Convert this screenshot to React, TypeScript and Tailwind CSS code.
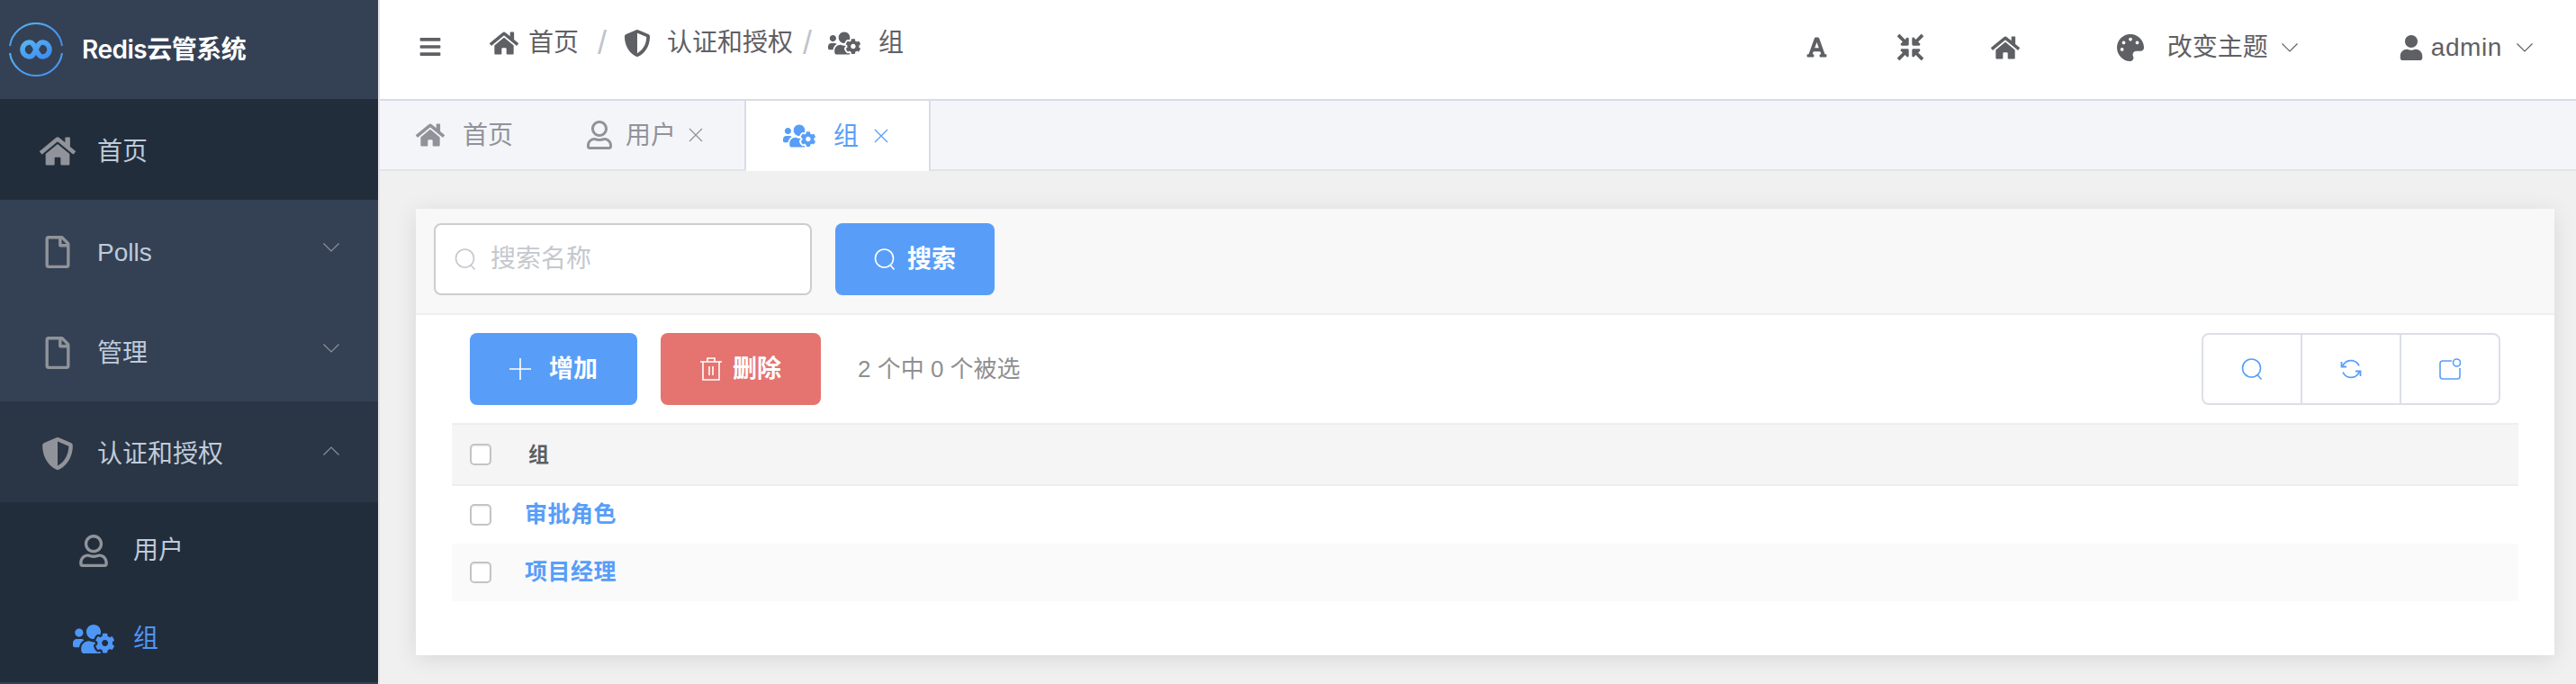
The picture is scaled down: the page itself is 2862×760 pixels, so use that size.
import React from 'react';
import {
  FaBars,
  FaCompressArrowsAlt,
  FaFont,
  FaHome,
  FaPalette,
  FaRegFile,
  FaRegUser,
  FaShieldAlt,
  FaUser,
  FaUsersCog,
} from 'react-icons/fa';

const Chevron = ({ up = false, className = '' }: { up?: boolean; className?: string }) => (
  <svg viewBox="0 0 18 10" fill="none" stroke="currentColor" strokeWidth="1.2" className={`w-[18px] h-[10px] ${className}`}>
    <path d={up ? 'M0.5 9.5 9 1l8.5 8.5' : 'M0.5 0.5 9 9l8.5-8.5'} />
  </svg>
);

const Close = ({ className = '' }: { className?: string }) => (
  <svg viewBox="0 0 16 16" fill="none" stroke="currentColor" strokeWidth="1.3" className={`w-4 h-4 ${className}`}>
    <path d="M1 1l14 14M15 1 1 15" />
  </svg>
);

const SearchIcon = ({ className = '' }: { className?: string }) => (
  <svg viewBox="0 0 24 24" fill="none" stroke="currentColor" strokeWidth="1.6" className={`w-6 h-6 ${className}`}>
    <circle cx="11.5" cy="11" r="10" />
    <path d="m18.5 19 4 4.5" />
  </svg>
);

const Logo = () => (
  <svg viewBox="0 0 60 60" fill="none" className="w-[60px] h-[60px]">
    <defs>
      <linearGradient id="logoRing" x1="0" y1="0" x2="1" y2="1">
        <stop offset="0" stopColor="#58b2f2" />
        <stop offset="1" stopColor="#3f8cf2" />
      </linearGradient>
    </defs>
    <path d="M1 26A29.3 29.3 0 0 1 59 26" stroke="url(#logoRing)" strokeWidth="2" />
    <path d="M1 34A29.3 29.3 0 0 0 59 34" stroke="url(#logoRing)" strokeWidth="2" />
    <path
      d="M30 30c-2-4-3.500-8-7-8a8 8 0 0 0 0 16c3.500 0 5-4 7-8s3.500-8 7-8a8 8 0 0 1 0 16c-3.500 0-5-4-7-8Z"
      stroke="url(#logoRing)"
      strokeWidth="5.5"
    />
  </svg>
);

const MenuItem = ({
  icon,
  label,
  open,
  className = '',
}: {
  icon: React.ReactNode;
  label: string;
  open?: boolean;
  className?: string;
}) => (
  <div className={`h-[112px] flex items-center pt-[3px] pl-[44px] pr-[43px] text-[28px] text-[#bfcbd9] ${className}`}>
    <span className="w-[40px] flex justify-center text-[#909399]">{icon}</span>
    <span className="ml-[24px] mt-[2px] flex-1">{label}</span>
    {open !== undefined && <Chevron up={open} className={`text-[#8b919b] ${open ? '-mt-[6px]' : '-mt-[9px]'}`} />}
  </div>
);

const Sidebar = () => (
  <aside className="w-[422px] shrink-0 border-r-2 border-[#e4e4e9] bg-[#344154] flex flex-col">
    <div className="h-[110px] flex items-center pl-[10px]">
      <Logo />
      <span className="ml-[21px] text-[28px] font-semibold text-white [font-family:Inter,'Noto_Sans_CJK_SC',sans-serif] tracking-[-0.5px]">
        Redis云管系统
      </span>
    </div>
    <MenuItem icon={<FaHome size={40} />} label="首页" className="bg-[#222d3c]" />
    <MenuItem icon={<FaRegFile size={36} />} label="Polls" open={false} />
    <MenuItem icon={<FaRegFile size={36} />} label="管理" open={false} />
    <MenuItem icon={<FaShieldAlt size={36} />} label="认证和授权" open className="bg-[#2a3545]" />
    <div className="bg-[#222d3c] pt-[5px] h-[200px] text-[28px]">
      <div className="h-[98px] flex items-center pl-[81px]">
        <span className="w-[46px] flex justify-center text-[#909399]">
          <FaRegUser size={36} />
        </span>
        <span className="ml-[21px] text-[#bfcbd9]">用户</span>
      </div>
      <div className="h-[97px] flex items-center pl-[81px] text-[#4f97f7]">
        <FaUsersCog size={46} />
        <span className="ml-[21px]">组</span>
      </div>
    </div>
  </aside>
);

const Header = () => (
  <header className="h-[112px] shrink-0 border-b-2 border-[#d8dce5] bg-white flex items-center pl-[44px] pr-[47px] text-[28px] text-[#5f6064]">
    <FaBars size={26} className="shrink-0 w-6 -mt-[6px]" />
    <nav className="ml-[54px] -mt-[15px] flex items-center">
      <FaHome size={32} />
      <span className="ml-[11px]">首页</span>
      <span className="ml-[21px] text-[36px] text-[#c0c4cc]">/</span>
      <span className="ml-[19px]">
        <FaShieldAlt size={30} />
      </span>
      <span className="ml-[18px]">认证和授权</span>
      <span className="ml-[11px] text-[36px] text-[#c0c4cc]">/</span>
      <span className="ml-[18px]">
        <FaUsersCog size={36} />
      </span>
      <span className="ml-[20px]">组</span>
    </nav>
    <div className="ml-auto -mt-[5px] flex items-center">
      <FaFont size={25} />
      <FaCompressArrowsAlt size={29} className="ml-[77px]" />
      <FaHome size={32} className="ml-[75px]" />
      <FaPalette size={30} className="ml-[108px]" />
      <span className="ml-[26px]">改变主题</span>
      <Chevron className="ml-[14px] w-[20px]" />
      <FaUser size={28} className="ml-[111px]" />
      <span className="ml-[8px] tracking-[0.6px]">admin</span>
      <Chevron className="ml-[15px] w-[20px]" />
    </div>
  </header>
);

const Tabs = () => (
  <div className="h-[78px] shrink-0 border-b-2 border-[#e2e4ea] bg-[#f4f5f9] flex text-[28px] text-[#909399]">
    <div className="w-[407px] flex items-center pl-[40px] border-r-2 border-[#d8dce5]">
      <FaHome size={32} />
      <span className="ml-[20px] mt-[2px]">首页</span>
      <FaRegUser size={32} className="ml-[80px]" />
      <span className="ml-[13px] mt-[2px]">用户</span>
      <Close className="ml-[14px]" />
    </div>
    <div className="w-[205px] h-[78px] flex items-center pl-[41px] bg-white text-[#589ef8] border-r-2 border-[#d8dce5]">
      <FaUsersCog size={36} />
      <span className="ml-[20px] mt-[2px]">组</span>
      <Close className="ml-[17px]" />
    </div>
  </div>
);

const Checkbox = () => (
  <span className="w-6 h-6 shrink-0 rounded-[5px] border-2 border-[#c4c4c4] bg-white shadow-[inset_0_1px_2px_rgba(0,0,0,0.08)]" />
);

const ToolbarBtn = ({ children, last = false }: { children: React.ReactNode; last?: boolean }) => (
  <div className={`flex-1 flex items-center justify-center text-[#589ef8] ${last ? '' : 'border-r-2 border-[#dcdfe8]'}`}>
    {children}
  </div>
);

const Card = () => (
  <section className="w-[2376px] h-[496px] bg-white shadow-[0_4px_24px_rgba(0,0,0,0.1)]">
    <div className="h-[118px] bg-[#f8f8f8] border-b-2 border-[#efefef] flex items-start pt-[16px] pl-[20px]">
      <div className="w-[420px] h-[80px] rounded-[8px] border-2 border-[#cdcdcd] bg-white flex items-center pl-[21px] text-[#c5c8ce]">
        <SearchIcon />
        <input placeholder="搜索名称" className="ml-[16px] w-[300px] text-[28px] outline-none placeholder:text-[#c5c8ce]" />
      </div>
      <button className="ml-[26px] w-[177px] h-[80px] rounded-[8px] bg-[#589ef8] text-white text-[27px] font-bold flex items-center justify-center">
        <SearchIcon />
        <span className="ml-[13px]">搜索</span>
      </button>
    </div>
    <div className="px-[40px]">
      <div className="flex items-center h-[120px]">
        <button className="ml-[20px] w-[186px] h-[80px] rounded-[8px] bg-[#589ef8] text-white text-[27px] font-bold flex items-center justify-center">
          <svg viewBox="0 0 24 24" fill="none" stroke="currentColor" strokeWidth="1.6" className="w-6 h-6">
            <path d="M12 0v24M0 12h24" />
          </svg>
          <span className="ml-[20px]">增加</span>
        </button>
        <button className="ml-[26px] w-[178px] h-[80px] rounded-[8px] bg-[#e5736f] text-white text-[27px] font-bold flex items-center justify-center">
          <svg viewBox="0 0 24 26" fill="none" stroke="currentColor" strokeWidth="1.6" className="w-6 h-[26px]">
            <path d="M0 5h24M8 5V1h8v4M3 5v20h18V5M10 10v10M14 10v10" />
          </svg>
          <span className="ml-[12px]">删除</span>
        </button>
        <span className="ml-[41px] text-[26px] text-[#8f8f8f]">2 个中 0 个被选</span>
        <div className="ml-auto mr-[20px] w-[332px] h-[80px] rounded-[8px] border-2 border-[#dcdfe8] flex">
          <ToolbarBtn>
            <SearchIcon />
          </ToolbarBtn>
          <ToolbarBtn>
            <svg viewBox="0 0 24 24" fill="none" stroke="currentColor" strokeWidth="1.8" className="w-6 h-6">
              <path d="M21 8.500A10 10 0 0 0 4 6.500L2.500 9M3 15.500A10 10 0 0 0 20 17.500L21.500 15" />
              <path d="M1.500 4v5.500h5.500M22.500 20v-5.500H17" />
            </svg>
          </ToolbarBtn>
          <ToolbarBtn last>
            <svg viewBox="0 0 24 24" fill="none" stroke="currentColor" strokeWidth="1.6" className="w-6 h-6">
              <path d="M14 3H4a3 3 0 0 0-3 3v14a3 3 0 0 0 3 3h16a3 3 0 0 0 3-3V11" />
              <circle cx="19.500" cy="5" r="4" />
            </svg>
          </ToolbarBtn>
        </div>
      </div>
      <div className="h-[70px] bg-[#f5f5f5] border-y-2 border-[#eeeeee] flex items-center pl-[20px]">
        <Checkbox />
        <span className="ml-[41px] text-[23px] font-bold text-[#5f5f5f]">组</span>
      </div>
      <div className="h-[64px] flex items-center pl-[20px]">
        <Checkbox />
        <a className="ml-[37px] text-[25px] font-bold tracking-[0.5px] text-[#589ef8]">审批角色</a>
      </div>
      <div className="h-[64px] bg-[#fafafa] flex items-center pl-[20px]">
        <Checkbox />
        <a className="ml-[37px] text-[25px] font-bold tracking-[0.5px] text-[#589ef8]">项目经理</a>
      </div>
    </div>
  </section>
);

export default function App() {
  return (
    <div className="w-[2862px] h-[760px] overflow-hidden flex bg-[#f0f0f0] [font-family:'Liberation_Sans','Noto_Sans_CJK_SC',sans-serif]">
      <Sidebar />
      <main className="flex-1 min-w-0 flex flex-col">
        <Header />
        <Tabs />
        <div className="pt-[42px] pl-[40px]">
          <Card />
        </div>
      </main>
    </div>
  );
}
